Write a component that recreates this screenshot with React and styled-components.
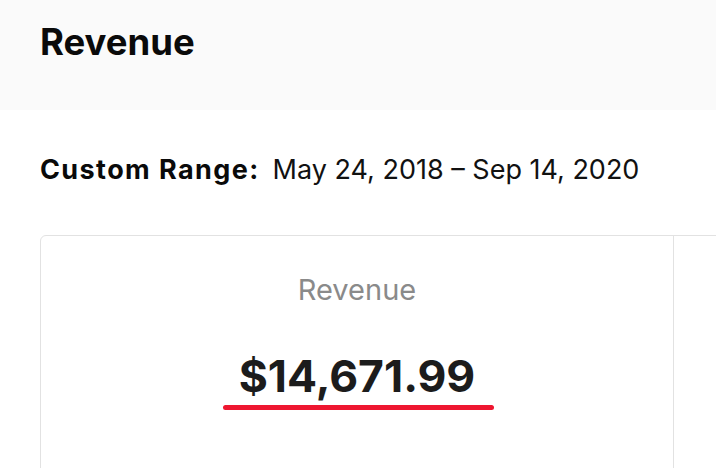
import React from "react";
import styled, { createGlobalStyle } from "styled-components";

const Global = createGlobalStyle`
  html, body { margin: 0; padding: 0; background: #ffffff; overflow: hidden; }
  body { font-family: Inter, "Liberation Sans", sans-serif; color: #111; }
`;

const Header = styled.header`
  height: 110px;
  background: #fafafa;
  box-sizing: border-box;
  padding: 22px 40px 0;
`;

const Title = styled.h1`
  margin: 0;
  font-size: 36.5px;
  line-height: 40px;
  font-weight: 700;
  color: #0a0a0a;
`;

const Body = styled.main`
  padding: 42px 0 0 40px;
`;

const RangeRow = styled.div`
  display: flex;
  align-items: baseline;
  gap: 13px;
  font-size: 27px;
  line-height: 36px;
`;

const RangeLabel = styled.span`
  font-weight: 700;
  letter-spacing: 1.4px;
  color: #0a0a0a;
`;

const RangeValue = styled.span`
  font-weight: 400;
  color: #111;
`;

const Card = styled.section`
  margin-top: 47px;
  width: 1400px;
  height: 300px;
  display: flex;
  border: 1px solid #e2e2e2;
  border-radius: 6px;
`;

const Cell = styled.div`
  width: 633px;
  flex: none;
  box-sizing: border-box;
  border-right: 1px solid #e2e2e2;
  display: flex;
  flex-direction: column;
  align-items: center;
  padding-top: 36px;
`;

const MetricLabel = styled.div`
  font-size: 29px;
  line-height: 36px;
  color: #8a8a8a;
`;

const MetricValue = styled.div`
  margin-top: 42px;
  font-size: 44.5px;
  line-height: 52px;
  font-weight: 700;
  color: #1c1c1c;
`;

const Underline = styled.div`
  margin-top: 3px;
  margin-left: 3px;
  width: 271px;
  height: 5px;
  border-radius: 3px;
  background: #ee1630;
`;

export default function App() {
  return (
    <>
      <Global />
      <Header>
        <Title>Revenue</Title>
      </Header>
      <Body>
        <RangeRow>
          <RangeLabel>Custom Range:</RangeLabel>
          <RangeValue>May 24, 2018 – Sep 14, 2020</RangeValue>
        </RangeRow>
        <Card>
          <Cell>
            <MetricLabel>Revenue</MetricLabel>
            <MetricValue>$14,671.99</MetricValue>
            <Underline />
          </Cell>
          <Cell />
        </Card>
      </Body>
    </>
  );
}
